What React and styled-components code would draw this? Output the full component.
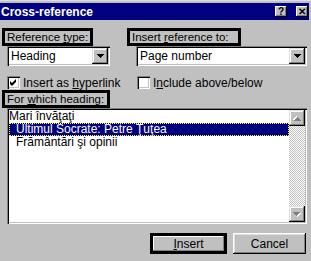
import React from 'react';
import styled, { createGlobalStyle } from 'styled-components';

const GlobalStyle = createGlobalStyle`
  html, body { margin: 0; padding: 0; background: #c0c0c0; }
  body { font-family: "Liberation Sans", Arial, sans-serif; font-size: 12px; color: #000; }
`;

const Window = styled.div`
  width: 311px;
  height: 261px;
  box-sizing: border-box;
  padding-top: 2px;
  background: #c0c0c0;
  border-top: 1px solid #dfdfdf;
  overflow: hidden;
`;

const TitleBar = styled.div`
  height: 17px;
  margin-right: 2px;
  background: #000080;
  display: flex;
  align-items: center;
  padding-left: 1px;
  padding-right: 1px;
`;

const Title = styled.div`
  flex: 1;
  color: #fff;
  font-weight: bold;
  font-size: 12px;
`;

const TitleButton = styled.div`
  width: 12px;
  height: 11px;
  margin-left: ${p => p.$gap || 0}px;
  background: #c0c0c0;
  box-shadow: inset -1px -1px #000, inset 1px 1px #fff, inset -2px -2px #808080;
  display: flex;
  align-items: center;
  justify-content: center;
  font-weight: bold;
  font-size: 10px;
  line-height: 1;
`;

const Body = styled.div`
  padding: 8px 0 0 2px;
`;

const Columns = styled.div`
  display: grid;
  grid-template-columns: 125px 1fr;
`;

const Column = styled.div`
  display: flex;
  flex-direction: column;
  align-items: flex-start;
`;

const Marked = styled.div`
  border: 3px solid #000;
  width: ${p => p.$width}px;
  height: 12px;
  line-height: 12px;
  padding-left: 2px;
  font-size: 11.5px;
  white-space: nowrap;
`;

const U = styled.span`
  text-decoration: underline;
`;

const Select = styled.div`
  margin-left: ${p => p.$indent}px;
  width: ${p => p.$width}px;
  height: 20px;
  box-sizing: border-box;
  background: #fff;
  box-shadow: inset 1px 1px #808080, inset 2px 2px #000, inset -1px -1px #fff, inset -2px -2px #c0c0c0;
  display: flex;
  align-items: center;
  padding: 2px;
`;

const SelectText = styled.div`
  flex: 1;
  padding-left: 2px;
`;

const ArrowButton = styled.div`
  width: 16px;
  height: 16px;
  box-sizing: border-box;
  background: #c0c0c0;
  box-shadow: inset -1px -1px #000, inset 1px 1px #dfdfdf, inset -2px -2px #808080, inset 2px 2px #fff;
  display: flex;
  align-items: center;
  justify-content: center;
`;

const CheckRow = styled.div`
  display: flex;
  align-items: center;
  margin: 10px 0 0 ${p => p.$indent}px;
  height: 13px;
`;

const CheckText = styled.span`
  white-space: nowrap;
`;

const Box = styled.div`
  width: 13px;
  height: 13px;
  box-sizing: border-box;
  background: #fff;
  box-shadow: inset 1px 1px #808080, inset 2px 2px #000, inset -1px -1px #fff, inset -2px -2px #c0c0c0;
  display: flex;
  align-items: center;
  justify-content: center;
  margin-right: 3px;
`;

const ListLabel = styled(Marked)`
  margin-top: 1px;
`;

const ListBox = styled.div`
  margin-left: 5px;
  width: 300px;
  height: 116px;
  box-sizing: border-box;
  background: #fff;
  box-shadow: inset 1px 1px #808080, inset 2px 2px #000, inset -1px -1px #fff, inset -2px -2px #c0c0c0;
  padding: 2px;
  display: flex;
`;

const Items = styled.div`
  flex: 1;
`;

const Item = styled.div`
  height: 13px;
  line-height: 13px;
  box-sizing: border-box;
  padding-left: ${p => p.$level === 2 ? 7 : 0}px;
  background: ${p => p.$selected ? '#000080' : 'transparent'};
  color: ${p => p.$selected ? '#fff' : '#000'};
  outline: ${p => p.$selected ? '1px dotted #ffff00' : 'none'};
  outline-offset: -1px;
  white-space: nowrap;
`;

const ScrollBar = styled.div`
  width: 16px;
  display: flex;
  flex-direction: column;
  justify-content: space-between;
  background: repeating-conic-gradient(#c0c0c0 0 25%, #fff 0 50%) 0 0 / 2px 2px;
`;

const Footer = styled.div`
  display: flex;
  justify-content: flex-end;
  align-items: center;
  gap: 6px;
  margin-top: 9px;
  padding-right: 5px;
`;

const InsertFrame = styled.div`
  border: 3px solid #000;
  width: 71px;
  height: 15px;
  display: flex;
`;

const Button = styled.div`
  flex: ${p => p.$fill ? 1 : 'none'};
  width: ${p => p.$fill ? 'auto' : '73px'};
  height: ${p => p.$fill ? 'auto' : '21px'};
  box-sizing: border-box;
  background: #c0c0c0;
  box-shadow: ${p => p.$fill
    ? 'inset -1px -1px #808080, inset 1px 1px #fff'
    : 'inset -1px -1px #000, inset 1px 1px #fff, inset -2px -2px #808080, inset 2px 2px #dfdfdf'};
  display: flex;
  align-items: center;
  justify-content: center;
`;

const DownArrow = ({ color = '#000' }) => (
  <svg width="7" height="4" viewBox="0 0 7 4">
    <path d="M0 0h7v1H0zM1 1h5v1H1zM2 2h3v1H2zM3 3h1v1H3z" fill={color} />
  </svg>
);

const GrayArrow = ({ up }) => (
  <svg width="8" height="5" viewBox="0 0 8 5" style={{ transform: up ? 'rotate(180deg)' : 'none' }}>
    <path d="M1 1h7v1H1zM2 2h5v1H2zM3 3h3v1H3zM4 4h1v1H4z" fill="#fff" />
    <path d="M0 0h7v1H0zM1 1h5v1H1zM2 2h3v1H2zM3 3h1v1H3z" fill="#808080" />
  </svg>
);

const Check = () => (
  <svg width="7" height="7" viewBox="0 0 7 7">
    <path d="M6 0v3L2 7 0 5V2l2 2z" fill="#000" />
  </svg>
);

export default function App() {
  return (
    <>
      <GlobalStyle />
      <Window>
        <TitleBar>
          <Title>Cross-reference</Title>
          <TitleButton>?</TitleButton>
          <TitleButton $gap={9}>✕</TitleButton>
        </TitleBar>
        <Body>
          <Columns>
            <Column>
              <Marked $width={83}>Reference <U>t</U>ype:</Marked>
              <Select $indent={5} $width={103}>
                <SelectText>Heading</SelectText>
                <ArrowButton><DownArrow /></ArrowButton>
              </Select>
              <CheckRow $indent={5}>
                <Box><Check /></Box>
                <CheckText>Insert as <U>h</U>yperlink</CheckText>
              </CheckRow>
            </Column>
            <Column>
              <Marked $width={106}>Insert <U>r</U>eference to:</Marked>
              <Select $indent={9} $width={171}>
                <SelectText>Page number</SelectText>
                <ArrowButton><DownArrow /></ArrowButton>
              </Select>
              <CheckRow $indent={10}>
                <Box />
                <CheckText>I<U>n</U>clude above/below</CheckText>
              </CheckRow>
            </Column>
          </Columns>
          <ListLabel $width={100}>For <U>w</U>hich heading:</ListLabel>
          <ListBox>
            <Items>
              <Item>Mari învăţaţi</Item>
              <Item $level={2} $selected>Ultimul Socrate: Petre Ţuţea</Item>
              <Item $level={2}>Frământări şi opinii</Item>
            </Items>
            <ScrollBar>
              <ArrowButton><GrayArrow up /></ArrowButton>
              <ArrowButton><GrayArrow /></ArrowButton>
            </ScrollBar>
          </ListBox>
          <Footer>
            <InsertFrame>
              <Button $fill><U>I</U>nsert</Button>
            </InsertFrame>
            <Button>Cancel</Button>
          </Footer>
        </Body>
      </Window>
    </>
  );
}
